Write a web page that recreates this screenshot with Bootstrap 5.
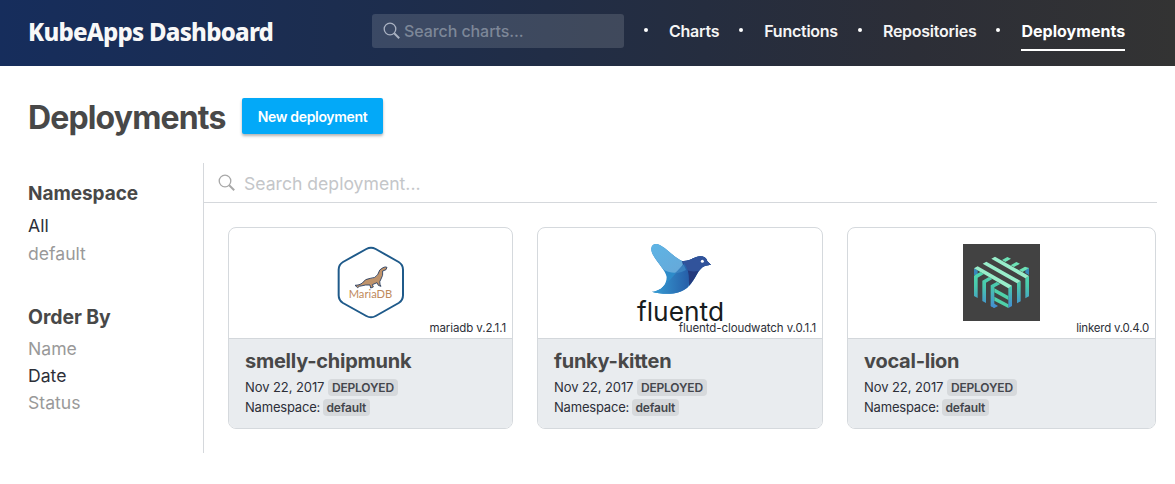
<!DOCTYPE html>
<html lang="en">
<head>
<meta charset="utf-8">
<meta name="viewport" content="width=device-width, initial-scale=1">
<title>KubeApps Dashboard</title>
<link href="https://cdn.jsdelivr.net/npm/bootstrap@5.3.0/dist/css/bootstrap.min.css" rel="stylesheet">
<style>
body{font-family:Inter,"Liberation Sans",sans-serif;color:#2d2f38;background:#fff;overflow:hidden}
.topbar{height:66px;background:linear-gradient(90deg,#162d5c 0,#1d2d4d 33%,#252d3f 60%,#2c2e37 78%,#333 100%);padding:0 50px 0 28px}
.brand{font:800 24px/30px "Noto Sans","Open Sans",sans-serif;color:#f8f8f8;width:344px;flex:none;letter-spacing:-.77px;white-space:nowrap;margin-top:-2px}
.chart-search{width:252px;flex:none;height:34px;margin-top:-4px;border-radius:3px;background:rgba(255,255,255,.135);color:#7d8798;font-size:16px;padding-left:11px;font-weight:500;letter-spacing:-.08px}
.menu{font-size:16px;font-weight:600;margin:-3px 0 0 20px;letter-spacing:-.25px}
.menu li{display:flex;align-items:center}
.menu li::before{content:"";width:4px;height:4px;border-radius:50%;background:#fff;margin:-3px 21px 0 0}
.menu a{color:#f5f5f5;text-decoration:none;height:39px;line-height:38px;display:block;margin-right:20px;white-space:nowrap;border-bottom:2px solid transparent}
.menu li:last-child a{margin-right:0}
.menu a.active{border-color:#fff;color:#fff;font-weight:700;letter-spacing:.02px}
.heading{padding:32px 0 0 28px;height:97px}
h1{font-size:32px;font-weight:700;line-height:40px;color:#484848;margin:0;width:198px;white-space:nowrap;letter-spacing:-.85px}
.btn-new{width:141px;height:36px;margin-left:16px;background:#03a9f8;color:#fff;border:0;border-radius:2px;padding:0;font-size:14px;line-height:35px;font-weight:600;letter-spacing:-.33px;box-shadow:0 2px 3px rgba(0,0,0,.3)}
.side{width:175px}
.side h2{font-size:19px;line-height:24px;font-weight:700;color:#484848;margin:19px 0 6px;letter-spacing:-.05px}
.side h2.order{font-size:19.4px;margin-top:37px}
.side a{display:block;font-size:17.6px;line-height:27.2px;color:#999;text-decoration:none}
.side a.active{color:#2d2f38}
.side .ns{line-height:27.8px}
.listing{border-left:1px solid #d5d8dc;height:290px;width:954px}
.find{height:40px;border-bottom:1px solid #d5d8dc;color:#c4c6c9;font-size:17.6px;padding-left:14px}
.tiles{display:grid;grid-template-columns:285px 286px 309px;gap:24px;padding:24px 0 0 24px}
.tile{height:202px;border:1px solid #d5d9dd;border-radius:8px;overflow:hidden;background:#fff}
.pic{height:111px;border-bottom:1px solid #d3d7db;position:relative}
.pic svg{overflow:visible}
.ver{position:absolute;right:6px;bottom:2px;font-size:11.5px;line-height:16px;white-space:nowrap;letter-spacing:-.09px}
.info{background:#e9ecef;flex:1;padding:8px 16px;font-size:13px;line-height:20px;white-space:nowrap;letter-spacing:-.08px}
.info h3{font-size:20px;line-height:28px;font-weight:700;color:#484848;margin:0 0 2px;letter-spacing:-.25px}
.ns-row{letter-spacing:-.2px}
.tag{display:inline-block;background:#d6d9dc;border-radius:4px;font-size:12px;line-height:17px;font-weight:600;padding:0 4px;color:#44464c;letter-spacing:-.18px}
.ns-row .tag{margin-left:-1px}
</style>
</head>
<body>
<header class="topbar d-flex align-items-center">
  <div class="brand">KubeApps Dashboard</div>
  <div class="chart-search d-flex align-items-center">
    <svg width="18" height="18" viewBox="0 0 18 18" fill="none" stroke="#aab2c2"><circle cx="7" cy="7" r="5.8" stroke-width="1.3"/><path d="M11.2 11.2L16.2 16.2" stroke-width="2"/></svg>
    <span style="margin-left:3px">Search charts...</span>
  </div>
  <ul class="menu list-unstyled d-flex mb-0">
    <li><a href="#">Charts</a></li><li><a href="#">Functions</a></li><li><a href="#">Repositories</a></li><li><a href="#" class="active">Deployments</a></li>
  </ul>
</header>
<main>
  <div class="heading d-flex align-items-start"><h1>Deployments</h1><button class="btn btn-new">New deployment</button></div>
  <div class="d-flex" style="padding-left:28px">
    <aside class="side">
      <h2>Namespace</h2>
      <a href="#" class="ns active">All</a><a href="#" class="ns">default</a>
      <h2 class="order">Order By</h2>
      <a href="#">Name</a><a href="#" class="active">Date</a><a href="#">Status</a>
    </aside>
    <section class="listing">
      <div class="find d-flex align-items-center">
        <svg width="18" height="18" viewBox="0 0 18 18" fill="none" stroke="#a8a8a8"><circle cx="7" cy="7" r="5.8" stroke-width="1.3"/><path d="M11.2 11.2L16.2 16.2" stroke-width="2"/></svg>
        <span class="ms-2 mt-1">Search deployment...</span>
      </div>
      <div class="tiles">
        <article class="tile d-flex flex-column">
          <div class="pic d-flex justify-content-center">
            <svg width="67" height="73" viewBox="36 33 201 219" style="margin-top:18px">
              <path d="M124 42Q138 34 152 42L221 81Q234 89 234 104V181Q234 196 221 204L152 243Q138 251 124 243L54 204Q41 196 41 181V104Q41 89 54 81Z" fill="#fff" stroke="#1f5a8a" stroke-width="6"/>
              <path d="M90 151L99 150Q105 149 112 144Q120 131 136 130Q151 130 158 119Q163 101 174 98Q181 94 186 97L183 104L173 108Q175 122 168 132Q162 140 165 148L168 154L160 151L156 143L142 149L145 156L137 159L135 150L122 150L103 154L98 158Z" fill="#c0936a" stroke="#243c62" stroke-width="2.6" stroke-linejoin="round"/>
              <text x="71" y="188" font-family="Lato,sans-serif" font-size="32" fill="#c08a5c" textLength="131" lengthAdjust="spacingAndGlyphs">MariaDB</text>
            </svg>
            <span class="ver">mariadb v.2.1.1</span>
          </div>
          <div class="info"><h3>smelly-chipmunk</h3><div>Nov 22, 2017 <span class="tag">DEPLOYED</span></div><div class="ns-row">Namespace: <span class="tag">default</span></div></div>
        </article>
        <article class="tile d-flex flex-column">
          <div class="pic d-flex justify-content-center">
            <svg width="88" height="82" viewBox="33 24 264 246" style="margin-top:15px">
              <defs>
                <linearGradient id="wing" x1="0" y1="0" x2=".8" y2="1"><stop offset="0" stop-color="#5db5e6"/><stop offset="1" stop-color="#66a9d9"/></linearGradient>
                <linearGradient id="tail" x1="0" x2="1"><stop offset="0" stop-color="#39a3d8"/><stop offset="1" stop-color="#265ea8"/></linearGradient>
                <clipPath id="bird"><path d="M79 40C81 26 95 24 108 32C132 45 150 70 172 78C197 80 208 64 226 64Q243 64 247 79L258 89L241 92C218 100 215 130 190 155C163 181 117 180 80 170C110 168 125 148 125 126C122 102 77 66 79 40Z"/></clipPath>
              </defs>
              <g clip-path="url(#bird)">
                <rect x="75" y="22" width="186" height="158" fill="#2d8bc9"/>
                <path d="M75 20H110C150 50 177 75 179 106C145 122 110 108 105 90L75 50Z" fill="url(#wing)"/>
                <path d="M172 78L210 60H260V95C235 96 216 105 205 145L192 155Q191 128 174 92Z" fill="#243a7d"/>
                <path d="M172 78L210 60H260V88Q220 119 183 105Z" fill="#31539b"/>
                <path d="M75 175C115 166 145 122 178 85Q199 117 188 162L150 184Z" fill="url(#tail)"/>
                <path d="M148 116Q168 114 183 105L176 89Z" fill="#3a82c0"/>
              </g>
              <circle cx="232" cy="79" r="4.5" fill="#fff"/>
              <text x="36" y="257" font-family="Inter,sans-serif" font-size="78" font-weight="400" fill="#171c20" textLength="261" lengthAdjust="spacingAndGlyphs">fluentd</text>
            </svg>
            <span class="ver">fluentd-cloudwatch v.0.1.1</span>
          </div>
          <div class="info"><h3>funky-kitten</h3><div>Nov 22, 2017 <span class="tag">DEPLOYED</span></div><div class="ns-row">Namespace: <span class="tag">default</span></div></div>
        </article>
        <article class="tile d-flex flex-column">
          <div class="pic d-flex justify-content-center">
            <svg width="77" height="77" viewBox="24 27 231 231" style="margin-top:16px">
              <defs><linearGradient id="leg" gradientUnits="userSpaceOnUse" x1="0" y1="105" x2="0" y2="215"><stop offset="0" stop-color="#50dcae"/><stop offset=".45" stop-color="#49c8ad"/><stop offset="1" stop-color="#438fd0"/></linearGradient></defs>
              <path fill="#424242" d="M24 27h231v231H24z"/>
              <path fill="#3688ba" d="M57 100L68 106V124L57 119ZM222 98V120L211 114V104Z"/>
              <path fill="#6ce2b5" d="M141 75L157 66L168 71L151 81ZM167 91L184 81L195 86L177 96ZM192 105L210 95L222 99L203 111Z"/>
              <g fill="url(#leg)">
                <path d="M57 122L76 111L87 117L68 128V189L57 183ZM82 137L102 126L112 132L93 143V204L82 198ZM107 151L125 141L136 147L118 157V219L107 213Z"/>
                <path d="M160 158L171 152V213L160 219ZM186 144L197 138V199L186 205ZM211 129L222 123V184L211 190Z"/>
                <path d="M118 219L107 213L118 206L129 213Z"/>
              </g>
              <path fill="#4fd0a9" d="M118 160L160 183V195L118 172ZM118 185L160 208V219L118 197Z"/>
              <path fill="#98edca" d="M57 100L68 94L171 152L160 160ZM83 86L94 80L197 138L186 145ZM109 71L120 65L222 123L211 130Z"/>
            </svg>
            <span class="ver" style="letter-spacing:-.22px">linkerd v.0.4.0</span>
          </div>
          <div class="info"><h3>vocal-lion</h3><div>Nov 22, 2017 <span class="tag">DEPLOYED</span></div><div class="ns-row">Namespace: <span class="tag">default</span></div></div>
        </article>
      </div>
    </section>
  </div>
</main>
<script src="https://cdn.jsdelivr.net/npm/bootstrap@5.3.0/dist/js/bootstrap.bundle.min.js"></script>
</body>
</html>
